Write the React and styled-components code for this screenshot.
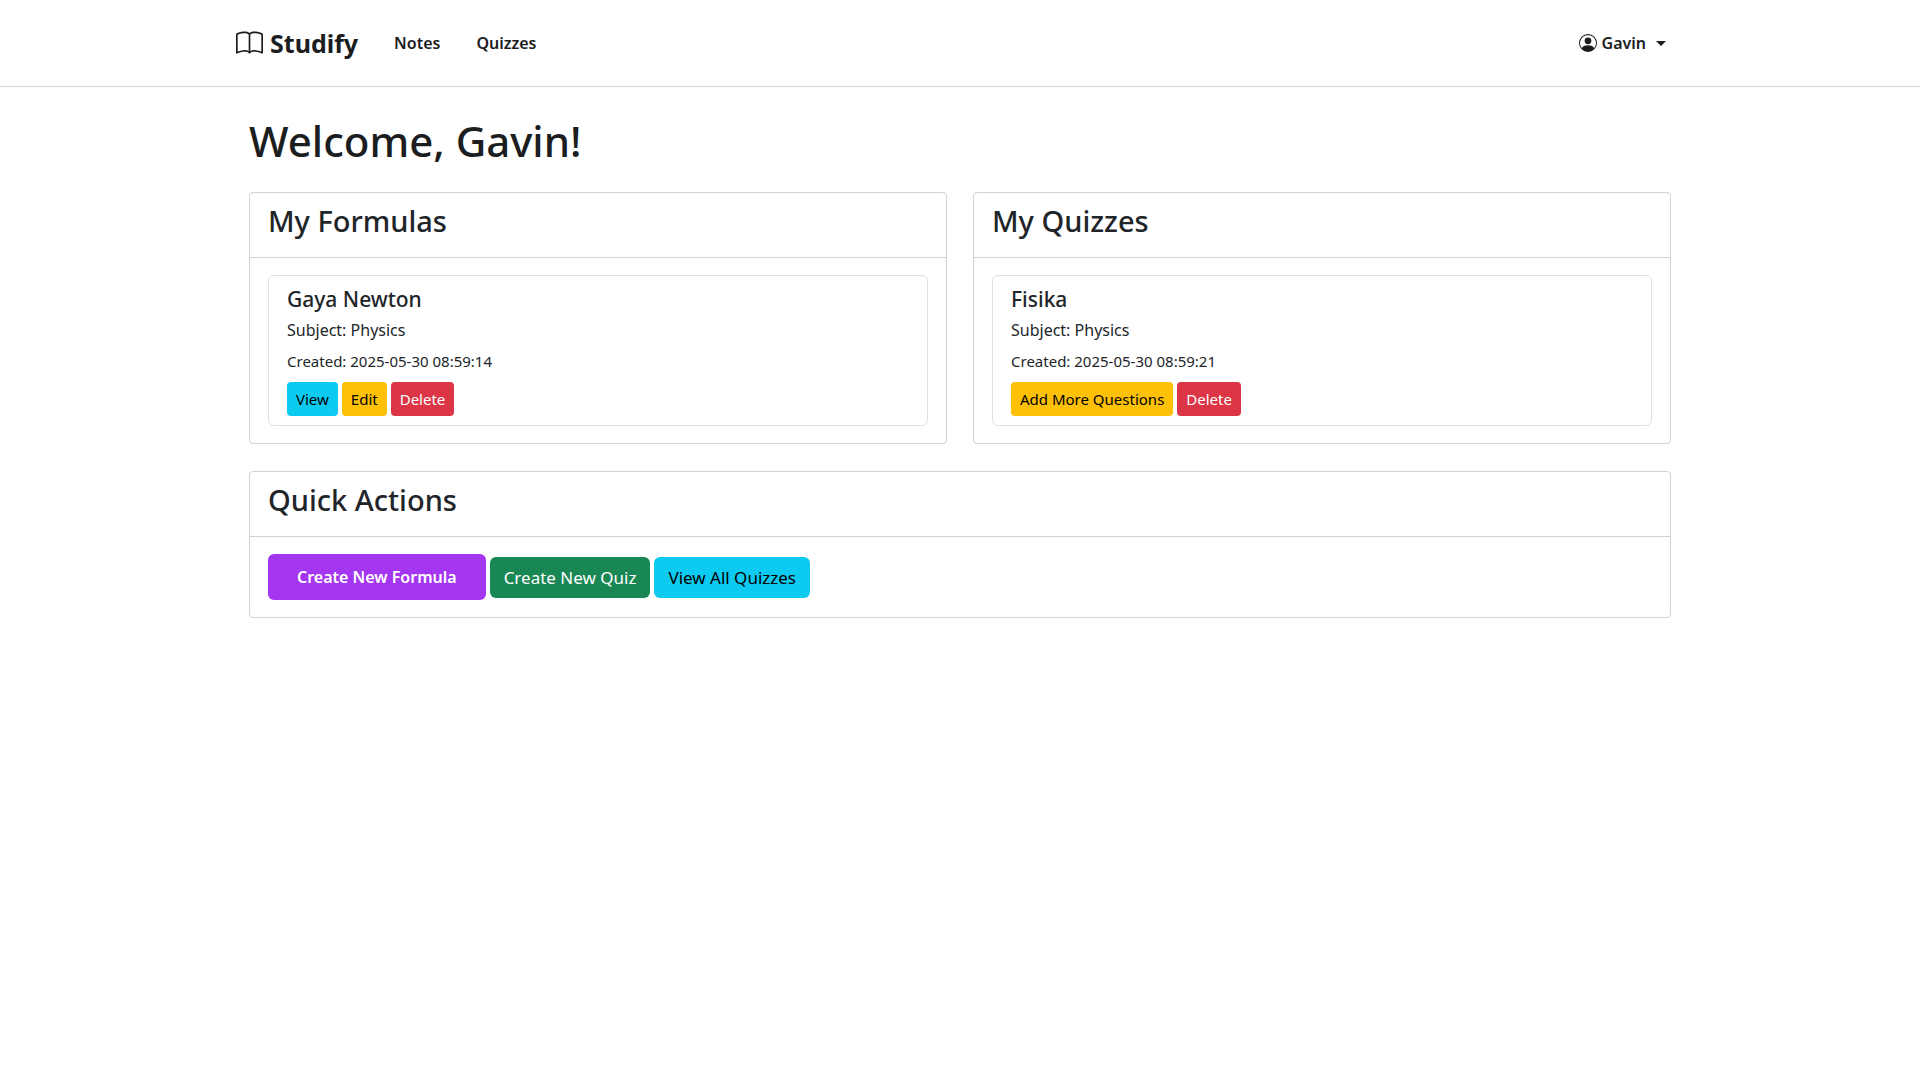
import React from "react";
import styled, { createGlobalStyle } from "styled-components";
import { BsBook, BsPersonCircle } from "react-icons/bs";

const GlobalStyle = createGlobalStyle`
  *, *::before, *::after { box-sizing: border-box; }
  body {
    margin: 0;
    background: #fff;
    color: #212529;
    font-family: "Noto Sans", "Open Sans", sans-serif;
    font-size: 16px;
    line-height: 26px;
  }
  h1, h2, h3, p { margin: 0; }
`;

const Header = styled.header`
  border-bottom: 1px solid #d0d2d6;
`;

const Navbar = styled.nav`
  display: flex;
  align-items: center;
  max-width: 1448px;
  height: 86px;
  margin: 0 auto;
`;

const Brand = styled.a`
  display: flex;
  align-items: center;
  gap: 7px;
  margin-right: 18px;
  color: #1b1d1f;
  font-size: 25px;
  font-weight: 700;
  line-height: 34px;
  text-decoration: none;
`;

const NavLink = styled.a`
  padding: 9px 18px;
  color: #1b1d1f;
  font-weight: 600;
  text-decoration: none;
`;

const UserMenu = styled.button`
  display: flex;
  align-items: center;
  gap: 5px;
  margin-left: auto;
  padding: 9px 18px;
  border: 0;
  background: transparent;
  color: #1b1d1f;
  font: inherit;
  font-weight: 600;
`;

const Caret = styled.span`
  margin-left: 5px;
  border-top: 5px solid currentColor;
  border-right: 5px solid transparent;
  border-left: 5px solid transparent;
`;

const Main = styled.main`
  max-width: 1448px;
  margin: 0 auto;
  padding: 28px 13px;
`;

const PageTitle = styled.h1`
  margin-bottom: 25px;
  color: #1b1d1f;
  font-size: 42px;
  font-weight: 500;
  line-height: 52px;
`;

const Grid = styled.div`
  display: grid;
  grid-template-columns: 1fr 1fr;
  gap: 27px 26px;
`;

const Card = styled.section`
  grid-column: ${(p) => (p.$wide ? "1 / -1" : "auto")};
  border: 1px solid #d0d2d9;
  border-radius: 4px;
  background: #fff;
`;

const CardHeader = styled.div`
  padding: 9px 18px 18px;
  border-bottom: 1px solid #d0d2d9;
`;

const CardTitle = styled.h2`
  font-size: 29px;
  font-weight: 500;
  line-height: 37px;
`;

const CardBody = styled.div`
  padding: 17px 18px;
`;

const Item = styled.article`
  padding: 9px 18px;
  border: 1px solid #dee2e6;
  border-radius: 6px;
`;

const ItemTitle = styled.h3`
  margin-bottom: 4px;
  font-size: 21px;
  font-weight: 500;
  line-height: 28px;
`;

const Subject = styled.p`
  margin-bottom: 5px;
`;

const Created = styled.p`
  margin-bottom: 8px;
  font-size: 15px;
`;

const ButtonRow = styled.div`
  display: flex;
  align-items: center;
  gap: 4px;
`;

const tones = {
  info: ["#0dcaf0", "#000"],
  warning: ["#ffc107", "#000"],
  danger: ["#dc3545", "#fff"],
  success: ["#198754", "#fff"],
};

const Button = styled.button`
  padding: 7px 14px;
  border: 0;
  border-radius: 6px;
  background: ${(p) => tones[p.$tone][0]};
  color: ${(p) => tones[p.$tone][1]};
  font: inherit;
  font-size: 17px;
  line-height: 27px;
  cursor: pointer;
`;

const SmallButton = styled(Button)`
  padding: 5px 9px;
  border-radius: 4px;
  font-size: 15px;
  line-height: 24px;
`;

const PrimaryButton = styled.button`
  padding: 10px 29px;
  border: 0;
  border-radius: 6px;
  background: #a435f0;
  color: #fff;
  font: inherit;
  font-weight: 600;
  cursor: pointer;
`;

function Panel({ title, wide, children }) {
  return (
    <Card $wide={wide}>
      <CardHeader>
        <CardTitle>{title}</CardTitle>
      </CardHeader>
      <CardBody>{children}</CardBody>
    </Card>
  );
}

function Entry({ title, subject, created, children }) {
  return (
    <Item>
      <ItemTitle>{title}</ItemTitle>
      <Subject>Subject: {subject}</Subject>
      <Created>Created: {created}</Created>
      <ButtonRow>{children}</ButtonRow>
    </Item>
  );
}

export default function App() {
  return (
    <>
      <GlobalStyle />
      <Header>
        <Navbar>
          <Brand href="#home">
            <BsBook size={27} aria-hidden="true" />
            Studify
          </Brand>
          <NavLink href="#notes">Notes</NavLink>
          <NavLink href="#quizzes">Quizzes</NavLink>
          <UserMenu type="button" aria-haspopup="menu">
            <BsPersonCircle size={18} aria-hidden="true" />
            Gavin
            <Caret />
          </UserMenu>
        </Navbar>
      </Header>
      <Main>
        <PageTitle>Welcome, Gavin!</PageTitle>
        <Grid>
          <Panel title="My Formulas">
            <Entry title="Gaya Newton" subject="Physics" created="2025-05-30 08:59:14">
              <SmallButton type="button" $tone="info">View</SmallButton>
              <SmallButton type="button" $tone="warning">Edit</SmallButton>
              <SmallButton type="button" $tone="danger">Delete</SmallButton>
            </Entry>
          </Panel>
          <Panel title="My Quizzes">
            <Entry title="Fisika" subject="Physics" created="2025-05-30 08:59:21">
              <SmallButton type="button" $tone="warning">Add More Questions</SmallButton>
              <SmallButton type="button" $tone="danger">Delete</SmallButton>
            </Entry>
          </Panel>
          <Panel title="Quick Actions" wide>
            <ButtonRow>
              <PrimaryButton type="button">Create New Formula</PrimaryButton>
              <Button type="button" $tone="success">Create New Quiz</Button>
              <Button type="button" $tone="info">View All Quizzes</Button>
            </ButtonRow>
          </Panel>
        </Grid>
      </Main>
    </>
  );
}
